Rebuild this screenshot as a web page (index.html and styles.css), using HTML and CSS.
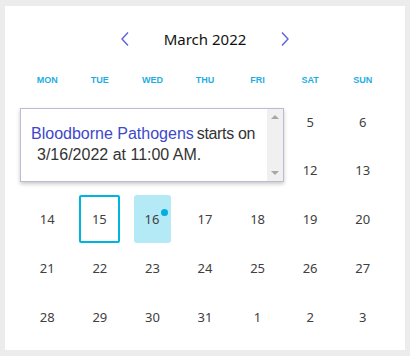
FILE: index.html
```html
<!DOCTYPE html>
<html lang="en">
<head>
    <meta charset="UTF-8">
    <meta name="viewport" content="width=device-width, initial-scale=1.0">
    <title>Calendar</title>
    <link rel="stylesheet" href="styles.css">
</head>
<body>
    <div class="calendar">
        <div class="cal-header">
            <button class="nav-btn" aria-label="Previous month">
                <svg width="10" height="16" viewBox="0 0 10 16"><path d="M8 1.5 L2 8 L8 14.5" fill="none" stroke="#5b63d6" stroke-width="1.4"/></svg>
            </button>
            <div class="month-title">March 2022</div>
            <button class="nav-btn" aria-label="Next month">
                <svg width="10" height="16" viewBox="0 0 10 16"><path d="M2 1.5 L8 8 L2 14.5" fill="none" stroke="#5b63d6" stroke-width="1.4"/></svg>
            </button>
        </div>

        <div class="weekdays">
            <div>MON</div><div>TUE</div><div>WED</div><div>THU</div><div>FRI</div><div>SAT</div><div>SUN</div>
        </div>

        <div class="days">
            <!-- cells under the open tooltip are kept but not painted -->
            <div class="cell covered"><span class="day">28</span></div>
            <div class="cell covered"><span class="day">1</span></div>
            <div class="cell covered"><span class="day">2</span></div>
            <div class="cell covered"><span class="day">3</span></div>
            <div class="cell covered"><span class="day">4</span></div>
            <div class="cell"><span class="day">5</span></div>
            <div class="cell"><span class="day">6</span></div>

            <div class="cell covered"><span class="day">7</span></div>
            <div class="cell covered"><span class="day">8</span></div>
            <div class="cell covered"><span class="day">9</span></div>
            <div class="cell covered"><span class="day">10</span></div>
            <div class="cell covered"><span class="day">11</span></div>
            <div class="cell"><span class="day">12</span></div>
            <div class="cell"><span class="day">13</span></div>

            <div class="cell"><span class="day">14</span></div>
            <div class="cell"><span class="day today">15</span></div>
            <div class="cell"><span class="day event">16<i class="dot"></i></span></div>
            <div class="cell"><span class="day">17</span></div>
            <div class="cell"><span class="day">18</span></div>
            <div class="cell"><span class="day">19</span></div>
            <div class="cell"><span class="day">20</span></div>

            <div class="cell"><span class="day">21</span></div>
            <div class="cell"><span class="day">22</span></div>
            <div class="cell"><span class="day">23</span></div>
            <div class="cell"><span class="day">24</span></div>
            <div class="cell"><span class="day">25</span></div>
            <div class="cell"><span class="day">26</span></div>
            <div class="cell"><span class="day">27</span></div>

            <div class="cell"><span class="day">28</span></div>
            <div class="cell"><span class="day">29</span></div>
            <div class="cell"><span class="day">30</span></div>
            <div class="cell"><span class="day">31</span></div>
            <div class="cell"><span class="day">1</span></div>
            <div class="cell"><span class="day">2</span></div>
            <div class="cell"><span class="day">3</span></div>
        </div>

        <div class="tooltip">
            <div class="tooltip-body">
                <a href="#" class="event-link">Bloodborne Pathogens</a><span class="event-text">starts on</span>
                <span class="event-time">3/16/2022 at 11:00 AM.</span>
            </div>
            <div class="scrollbar">
                <span class="arrow-up"></span>
                <span class="arrow-down"></span>
            </div>
        </div>
    </div>
</body>
</html>
```

FILE: styles.css
```css
body {
    margin: 0;
    background-color: #ececec;
    height: 356px;
    overflow: hidden;
}

.calendar {
    position: relative;
    box-sizing: border-box;
    width: 400px;
    height: 344px;
    margin: 6px 5px;
    padding: 18px 16px 0;
    background-color: #fff;
}

.cal-header {
    display: flex;
    justify-content: center;
    align-items: center;
    height: 30px;
}

.nav-btn {
    display: flex;
    align-items: center;
    justify-content: center;
    width: 24px;
    height: 30px;
    padding: 0;
    border: none;
    background: none;
    cursor: pointer;
}

.month-title {
    width: 136px;
    text-align: center;
    font-family: "Noto Sans", sans-serif;
    font-size: 15px;
    color: #111;
}

.weekdays {
    display: grid;
    grid-template-columns: repeat(7, 1fr);
    height: 20px;
    margin-top: 16px;
    align-items: center;
    text-align: center;
    font-family: "Liberation Sans", Arial, sans-serif;
    font-size: 9px;
    font-weight: bold;
    color: #1eaee2;
}

.days {
    display: grid;
    grid-template-columns: repeat(7, 1fr);
    grid-auto-rows: 48.75px;
    margin-top: 7.6px;
}

.cell {
    display: flex;
    justify-content: center;
    align-items: flex-start;
}

.cell.covered {
    visibility: hidden;
}

.day {
    position: relative;
    box-sizing: border-box;
    display: flex;
    align-items: center;
    justify-content: center;
    width: 38px;
    height: 48px;
    font-family: "Noto Sans", sans-serif;
    font-size: 13px;
    color: #404040;
}

.day.today {
    width: 41px;
    border: 2px solid #00b4e0;
    border-radius: 2px;
    margin-left: -1px;
}

.day.event {
    width: 37px;
    background-color: #b4e9f6;
    border-radius: 3px;
    padding-right: 1px;
}

.dot {
    position: absolute;
    top: 14px;
    right: 3px;
    width: 7px;
    height: 7px;
    border-radius: 50%;
    background-color: #00aee0;
}

.tooltip {
    position: absolute;
    left: 15px;
    top: 102px;
    box-sizing: border-box;
    width: 264px;
    height: 74px;
    display: flex;
    background-color: #fff;
    border: 1px solid #bdbad6;
    box-shadow: 0 2px 4px rgba(0, 0, 0, 0.22);
}

.tooltip::after {
    content: "";
    position: absolute;
    left: 124px;
    bottom: -8px;
    width: 11px;
    height: 11px;
    background-color: #fff;
    transform: rotate(45deg);
    box-shadow: 2px 2px 3px rgba(0, 0, 0, 0.15);
    z-index: -1;
}

.tooltip::before {
    content: "";
    position: absolute;
    left: 119px;
    bottom: 0;
    width: 24px;
    height: 2px;
    background-color: #fff;
    z-index: 1;
}

.tooltip-body {
    flex: 1;
    padding: 14px 0 0 10px;
    font-family: "Liberation Sans", Arial, sans-serif;
    font-size: 16px;
    line-height: 21px;
    color: #333;
}

.event-link {
    color: #3e48c9;
    text-decoration: none;
}

.event-text {
    margin-left: 3px;
    letter-spacing: -0.35px;
}

.event-time {
    display: block;
    padding-left: 6px;
}

.scrollbar {
    position: relative;
    width: 16px;
    background-color: #f0f0f0;
}

.arrow-up, .arrow-down {
    position: absolute;
    left: 4px;
    width: 0;
    height: 0;
    border-left: 4px solid transparent;
    border-right: 4px solid transparent;
}

.arrow-up {
    top: 6px;
    border-bottom: 4px solid #a6a6a6;
}

.arrow-down {
    bottom: 6px;
    border-top: 4px solid #a6a6a6;
}
```
